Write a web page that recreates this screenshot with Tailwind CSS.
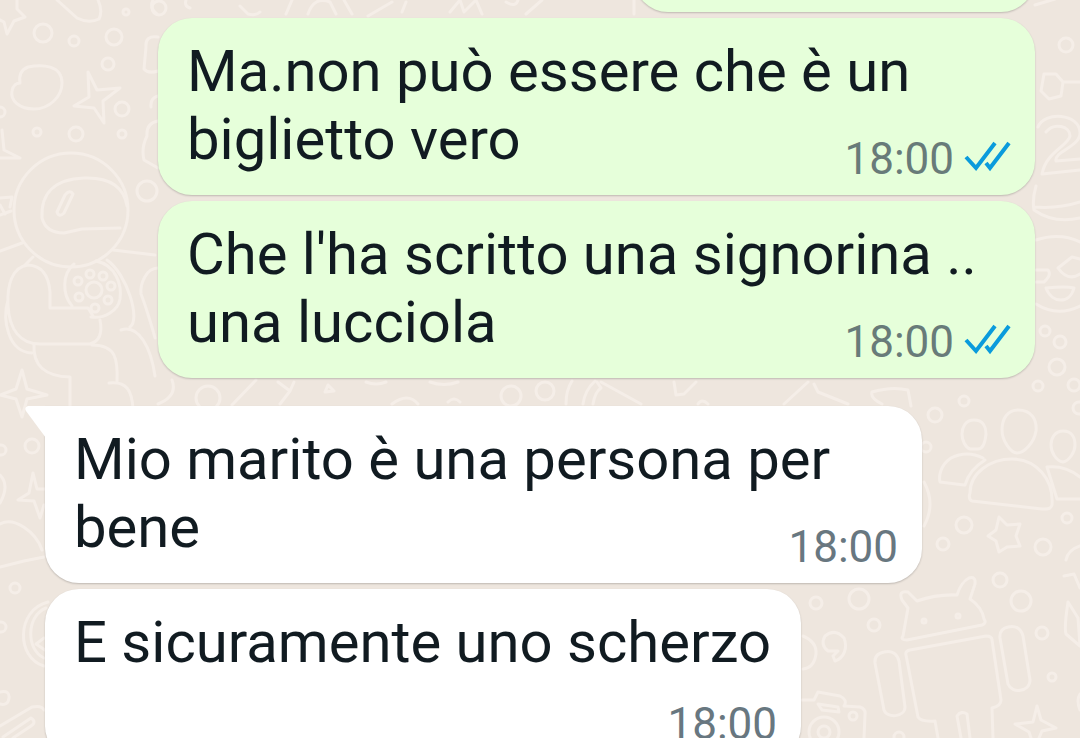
<!DOCTYPE html>
<html lang="it">
<head>
    <meta charset="UTF-8">
    <meta name="viewport" content="width=device-width, initial-scale=1.0">
    <title>Chat</title>
    <script src="https://cdn.jsdelivr.net/npm/@tailwindcss/browser@4"></script>
</head>
<body class="relative h-screen overflow-hidden bg-[#eee6de] font-['Roboto',sans-serif] text-[#111b21]">

    <!-- Wallpaper -->
    <svg class="absolute inset-0 w-full h-full" viewBox="0 0 1080 738" preserveAspectRatio="xMidYMid slice" fill="none" stroke="#f5eee8" stroke-width="3" stroke-linecap="round" stroke-linejoin="round" aria-hidden="true">
        <!-- left side -->
        <path d="M17 0v9l8 8-11 4-7 13-3-12-6-3"/>
        <path d="M57 0l20 18q12 6 22 1 4-8-1-19M153 0q-4 8 4 14"/>
        <path d="M20 83q-2-12 8-16c14-3 34-2 34 16 0 14-13 26-28 26-14 0-24-8-22-18 1-6 5-8 8-8z"/>
        <path d="M88 72l9 18 23-2-17 13 1 22-10-15-20-2 15-9z"/>
        <path d="M2 130l2 20 16 8H0M158 37q-13-2-12 10l-2 22q4 5 14 2M158 96q-8 2-7 11M158 121q-12 2-11 15-6 12-3 24l14 8"/>
        <circle cx="43" cy="33" r="9"/>
        <circle cx="114" cy="37" r="8"/>
        <circle cx="74" cy="41" r="5"/>
        <circle cx="108" cy="64" r="6"/>
        <circle cx="122" cy="109" r="7"/>
        <circle cx="76" cy="134" r="7"/>
        <circle cx="122" cy="134" r="4"/>
        <circle cx="37" cy="132" r="4"/>
        <circle cx="126" cy="12" r="3"/>
        <circle cx="147" cy="191" r="10"/>
        <circle cx="0" cy="112" r="5"/>
        <path d="M0 198l12-1-2 10M0 205l5 9M0 215l11-4"/>
        <!-- astronaut -->
        <circle cx="71" cy="210" r="57"/>
        <path d="M42 218q-2-38 42-40c28-1 40 10 43 28M42 218q4 15 22 15l18-4 38-1"/>
        <path d="M57 212l8-17q5-6 8-1l-9 19q-5 5-7-1z"/>
        <path d="M0 251l22-8M113 250l42 5M33 257l-8 8M107 260c20 14 34 60 23 67"/>
        <path d="M50 308h38l5 8M50 308v-16q-2-26-22-27c-16 2-21 20-20 40 1 24 12 40 34 39h48q14-4 10-24M8 300c-6 20 0 52 24 53"/>
        <path d="M34 344q-2 32 36 33v33M92 345c24 0 26 14 25 37M109 383c18-2 23 8 24 26M121 330c18-6 30 18 34 46M158 268c-12 0-18 16-17 26 4 10 12 36 14 44"/>
        <path d="M72 306c-10-12-10-32 2-42M96 261c20 4 26 24 24 38-2 12-16 20-29 18"/>
        <circle cx="94" cy="290" r="8"/>
        <circle cx="78" cy="281" r="4"/>
        <circle cx="90" cy="274" r="4"/>
        <circle cx="103" cy="276" r="4"/>
        <circle cx="111" cy="286" r="4"/>
        <circle cx="108" cy="300" r="4"/>
        <circle cx="95" cy="308" r="4"/>
        <circle cx="79" cy="297" r="4"/>
        <path d="M22 370l5 19 20 6-20 4-5 18-6-18-16-4 16-6z"/>
        <circle cx="32" cy="446" r="7"/>
        <circle cx="1" cy="450" r="5"/>
        <path d="M33 473l4 16h10M33 473l-4 20-11 7 16 1 6 17 4-13M0 475q10 10 0 28M0 524c14-8 36 8 42 26M0 567l24-6 20-4"/>
        <circle cx="15" cy="588" r="5"/>
        <circle cx="1" cy="627" r="5"/>
        <path d="M48 602c-32 8-32 56-4 64M46 608c-20 8-20 42-2 50M44 638l-8 6 9 6"/>
        <path d="M0 692q10-2 9 6t-9 6M0 726l32-19q10-2 12 3M3 737l28-19q6 4 0 8l-18 12"/>
        <!-- strip above and between the bubbles -->
        <circle cx="159" cy="8" r="7"/>
        <path d="M186 0q-2 6 4 8M240 6l8 8q8 2 12-2M286 14l6-14M308 14q6-18 22-12l6 12M344 0l8 14M368 16l24-14M402 12l4-10M450 12l10-12 4 12 12-12 6 14M506 2q10 6 12-2M526 14l16-14M634 14V0M1035 5l20-6"/>
        <circle cx="208" cy="398" r="12"/>
        <path d="M172 380q6 16-14 24M232 405l24-25M278 382l12 9-10 13M294 382l-4 9M325 392l3-7 6 6zM392 404q16-12 26 0M366 382q10 4 20 0M430 382q14 5 28 0M448 402q6-6 12 0"/>
        <circle cx="511" cy="396" r="10"/>
        <circle cx="545" cy="391" r="9"/>
        <path d="M566 404q0-14 6-23M583 404q2-14 12-23M593 404q2-12 8-16l-4-6M601 382l40 22M674 382l2 13 8-1 12-12M698 404q4-6 10 0M784 404l24-22M814 384l4 8 30 12M872 392q20-6 36-2l3 16M872 392q-2 6 10 12"/>
        <!-- right side -->
        <circle cx="1066" cy="45" r="7"/>
        <path d="M1044 74h12l7 8-2 14-12 3-8-8zM1063 82h17"/>
        <path d="M1038 127c6-16 42-14 42 6 0 14-26 18-24 28l24-2M1046 132c8-10 24-6 24 4-2 10-24 16-28 38l38-4"/>
        <path d="M1036 186q-4 14-2 24 20 14 46 8M1034 207q24 2 46-5"/>
        <path d="M1036 240c18-6 32-4 44 2M1036 304c16 10 32 8 44 2M1036 270l12 0q4 5-4 12h-8M1058 268l14-11 8 2M1058 268q10 14 22 6M1046 288q20-2 28 0c-4 16-22 16-28 0z"/>
        <circle cx="1045" cy="331" r="5"/>
        <circle cx="1060" cy="342" r="6"/>
        <circle cx="1057" cy="367" r="8"/>
        <circle cx="1038" cy="386" r="5"/>
        <circle cx="1074" cy="385" r="6"/>
        <circle cx="964" cy="401" r="5"/>
        <circle cx="935" cy="415" r="7"/>
        <circle cx="926" cy="447" r="5"/>
        <circle cx="1079" cy="408" r="6"/>
        <!-- people -->
        <path d="M974 420c10 0 12 8 12 14-1 10-4 15-8 15h-8c-5-2-8-9-8-15s3-14 12-14z"/>
        <path d="M1018 410c14 0 19 10 18 21-2 12-12 22-19 22-6 0-15-12-15-23 0-12 6-20 16-20z"/>
        <path d="M1063 431c9 0 12 7 12 14s-6 16-12 17c-7-1-12-10-12-17s4-14 12-14z"/>
        <path d="M970 493c0-20 20-34 42-34 24 0 42 20 40 46-1 4-4 4-10 4l-70-8q-4-2-2-8zM983 458q-16-8-32 0c-12 8-12 20-11 24l24 3M985 460q-16 10-20 25M1047 467q18-2 33 10M1047 467l10 32h23"/>
        <path d="M999 517l8 8 13-1-4 12 4 10-13 1-8 5-3-11-8-5 8-6z"/>
        <circle cx="964" cy="525" r="8"/>
        <circle cx="943" cy="544" r="6"/>
        <circle cx="1043" cy="547" r="8"/>
        <circle cx="1067" cy="518" r="5"/>
        <path d="M924 482q12 22 0 44M1066 560q2-10 14-14"/>
        <!-- robot -->
        <path d="M903 636q-3 4 4 4l75-15q5-2 2-6-2-12-14-20l5-15q1-8-6-6-8 4-12 17-20-1-40 6l-9-9q-10-2-6 8l6 8z"/>
        <circle cx="924" cy="621" r="2"/>
        <circle cx="958" cy="616" r="2"/>
        <path d="M938 738l-3-17q-14 1-17-4l-12-62q-1-4 4-5l76-14q6 0 6 4l9 60q0 6-9 8l1 30"/>
        <path d="M884 652c8-2 13 2 15 9l6 46c0 10-18 12-21 3l-9-47q-1-9 9-11z"/>
        <path d="M1008 627c8-2 13 2 15 9l7 44c0 12-18 14-22 4l-8-46q-1-9 8-11z"/>
        <path d="M961 738l-4-22q4-6 10-2l3 24"/>
        <path d="M1037 706l4 14 15 8-14 3-3 7M1037 706l-4 16-18 2 14 8 2 6"/>
        <circle cx="859" cy="599" r="10"/>
        <circle cx="816" cy="603" r="6"/>
        <circle cx="874" cy="625" r="6"/>
        <circle cx="1000" cy="580" r="7"/>
        <circle cx="1021" cy="601" r="10"/>
        <circle cx="1042" cy="633" r="6"/>
        <circle cx="1052" cy="677" r="4"/>
        <circle cx="899" cy="737" r="5"/>
        <path d="M1064 576l10-2 6 14M1068 602l10 16 2 28-14-12q-2-6 2-32M1080 694q-4 6 0 16"/>
        <path d="M803 636q14 6 13 18-2 14-13 15M838 651h-10q-8-6-3-15 10-8 19 2c4 10 0 20-9 23l-2-5z"/>
        <!-- camera -->
        <path d="M802 700h12l4-8 22 4q8 4 4 10l16 1q6 2 5 8l-1 23"/>
        <path d="M818 704l20 3 1 5-17-2z"/>
        <circle cx="824" cy="732" r="15"/>
        <circle cx="824" cy="732" r="6"/>
        <circle cx="853" cy="716" r="4"/>
    </svg>

    <main class="relative flex flex-col -mt-41 px-[45px]">
        <!-- Previous message, scrolled out of view -->
        <div class="self-end w-[401px] h-[176px] rounded-[34px] bg-[#e6ffda] shadow-[0_1px_2px_#0003]"></div>

        <div class="self-end w-full max-w-[877px] mt-[6px] pt-[19px] pb-[10px] pl-[29px] pr-[25px] rounded-[34px] bg-[#e6ffda] shadow-[0_1px_2px_#0003]">
            <p class="flow-root text-[58px] leading-[68px]">Ma.non può essere che è un biglietto vero
                <span class="float-right flex items-center gap-[10px] mt-7 text-[44px] leading-[52px] text-[#687b79]">
                    <time>18:00</time>
                    <svg class="w-[46px] h-9 overflow-visible" viewBox="0 0 46 36" fill="none" stroke="#0a9bdc" stroke-width="4" role="img" aria-label="Letto">
                        <path d="M2 16l10 11L31 2M22 22l4 5L45 2"/>
                    </svg>
                </span>
            </p>
        </div>

        <div class="self-end w-full max-w-[877px] mt-[6px] pt-[19px] pb-[10px] pl-[29px] pr-[25px] rounded-[34px] bg-[#e6ffda] shadow-[0_1px_2px_#0003]">
            <p class="flow-root text-[58px] leading-[68px]">Che l'ha scritto una signorina .. una lucciola
                <span class="float-right flex items-center gap-[10px] mt-7 text-[44px] leading-[52px] text-[#687b79]">
                    <time>18:00</time>
                    <svg class="w-[46px] h-9 overflow-visible" viewBox="0 0 46 36" fill="none" stroke="#0a9bdc" stroke-width="4" role="img" aria-label="Letto">
                        <path d="M2 16l10 11L31 2M22 22l4 5L45 2"/>
                    </svg>
                </span>
            </p>
        </div>

        <div class="relative self-start w-full max-w-[877px] mt-7 pt-[19px] pb-[10px] pl-[29px] pr-6 rounded-[34px] rounded-tl-none bg-white shadow-[0_1px_2px_#0003]">
            <svg class="absolute top-0 -left-5 w-[21px] h-8" viewBox="0 0 21 32" fill="#fff" aria-hidden="true">
                <path d="M21 0H3Q-1 1 1 5L21 32z"/>
            </svg>
            <p class="flow-root text-[58px] leading-[68px]">Mio marito è una persona per bene
                <time class="float-right mt-7 text-[44px] leading-[52px] text-[#687780]">18:00</time>
            </p>
        </div>

        <div class="self-start max-w-[877px] mt-[6px] pt-[19px] pb-[10px] pl-[29px] pr-6 rounded-[34px] bg-white shadow-[0_1px_2px_#0003]">
            <p class="pr-[6px] text-[58px] leading-[68px]">E sicuramente uno scherzo</p>
            <div class="flex justify-end mt-[22px] text-[44px] leading-[52px] text-[#687780]">
                <time>18:00</time>
            </div>
        </div>
    </main>
</body>
</html>
